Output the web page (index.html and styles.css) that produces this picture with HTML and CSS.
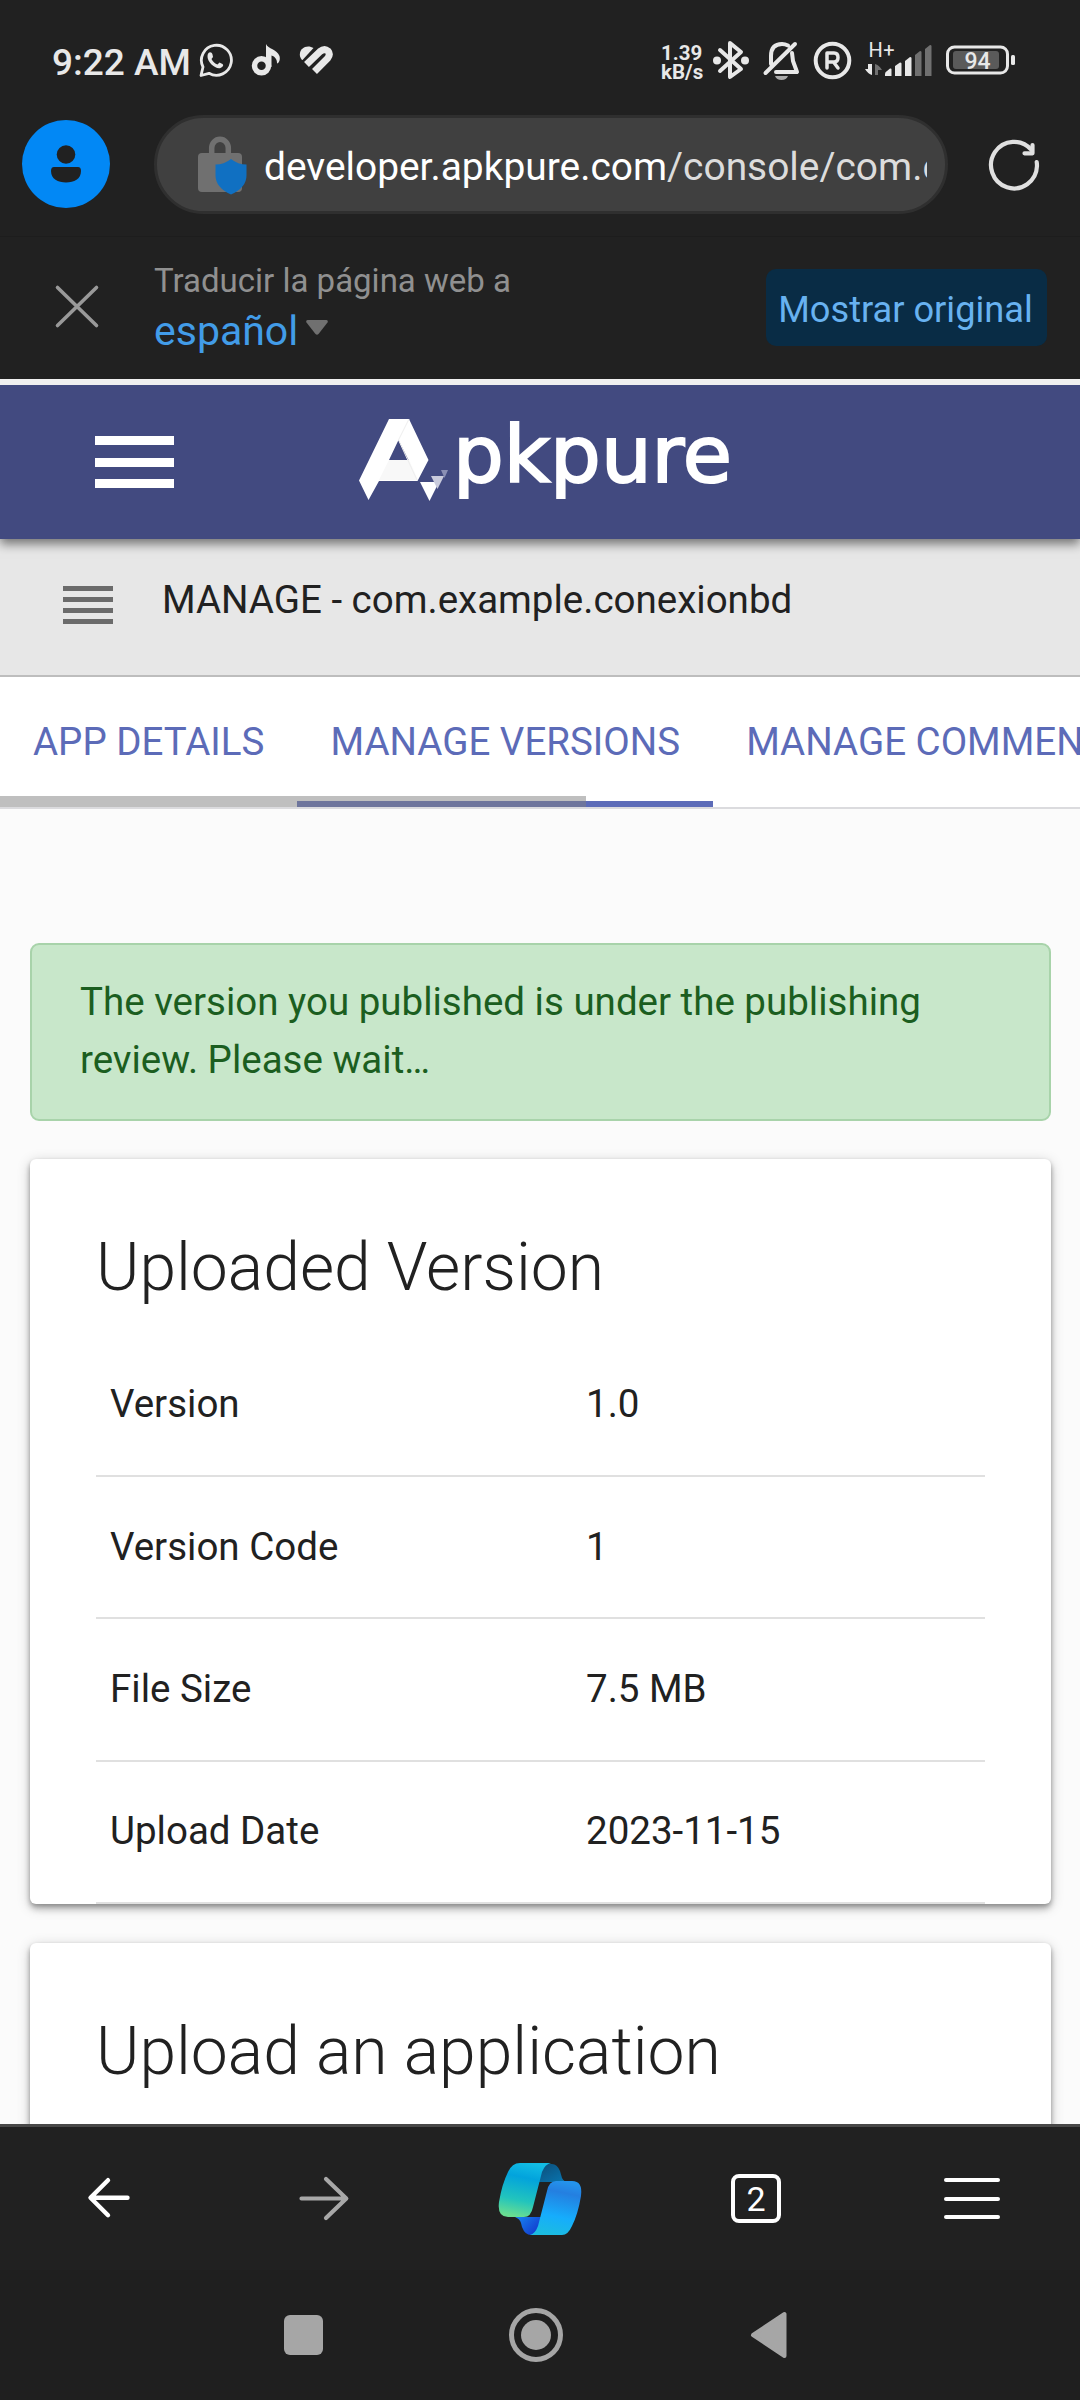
FILE: index.html
```html
<!DOCTYPE html>
<html lang="es">
<head>
<meta charset="utf-8">
<title>APKPure Developer Console</title>
<link rel="stylesheet" href="styles.css">
</head>
<body>
<div class="screen">
  <header class="browser-top">
    <div class="status">
      <span class="clock">9:22 AM</span>
      <svg class="notif" width="136" height="40" viewBox="198 42 136 40">
        <path d="M201 75.500 L203 67 A15 15 0 1 1 209 73.300 Z" fill="none" stroke="#e8e8e8" stroke-width="2.800" stroke-linejoin="round"/>
        <path d="M208.500 53c1.500-1.500 3.500-.5 4 1.500l.5 2.500-1.500 2c1.500 3 3.500 4.500 6 5.500l2-2 3 1.500c1.500 1 .5 3-2 4-5 1.500-13.500-6-13-12 .1-1.300.4-2.300 1-3z" fill="#e8e8e8"/>
        <circle cx="261.500" cy="65.800" r="7" fill="none" stroke="#e8e8e8" stroke-width="5.500"/>
        <path d="M266 44c2 5 11 5 13.500 12 1 4-.5 7-2.500 7.500.3-4-2-7-5.500-8V67H266z" fill="#e8e8e8"/>
        <path d="M302 60a8 8 0 0 1 3-13c3-1 6-.500 8.500 1L302.500 60z" fill="#e8e8e8"/>
        <path d="M306.500 64.500 L320 51.500 Q324.500 47.800 328 51 Q330.800 54.500 327.500 58.500 L314.500 71.500" fill="none" stroke="#e8e8e8" stroke-width="7"/>
      </svg>
      <div class="speed"><span>1.39</span><span>kB/s</span></div>
      <svg class="signals" width="350" height="48" viewBox="710 38 350 48">
        <g fill="none" stroke="#e8e8e8" stroke-width="4" stroke-linejoin="round" stroke-linecap="round">
          <path d="M720 50 L741 69 L730 77 V43 L741 52 L720 71"/>
          <path d="M771 64 V56 Q771 44 782 44 Q785 44 788 45.500 M792 53 L793 61 L797 72 H776 M765.500 73 L795 44"/>
          <circle cx="832.500" cy="60.500" r="16.800"/>
          <path d="M827 68 V53 H834 Q838 53 838 57.500 Q838 62 834 62 H828 M833.500 62 L838 68" stroke-width="3.500"/>
          <rect x="947.500" y="47" width="60" height="26" rx="7" stroke-width="3"/>
        </g>
        <g fill="#e8e8e8">
          <circle cx="717" cy="60.500" r="4"/><circle cx="745" cy="60.500" r="4"/>
          <path d="M775 76h13q-1.500 4-6.500 4t-6.500-4z" fill="#aaa"/>
          <path d="M868 64h4v11q-4-1-7-6h3z"/>
          <path d="M875 64q4 1 7 6h-4v5h-3z" fill="#707070"/>
          <path d="M885 74q0-2 2-3l3-2.500q1.500-.5 1.500 1V76h-6.500z"/>
          <path d="M895 66l5-3.500q1.500 0 1.500 1V76H895zM905 61l5-4q1.500 0 1.500 1V76H905z"/>
          <path d="M915 55l5-4q1.500 0 1.500 1V76H915zM925 49l5-4q1.500 0 1.500 1V76H925z" fill="#707070"/>
          <rect x="953" y="51" width="46" height="18" rx="3" fill="#5a5a5a"/>
          <rect x="1011" y="55" width="4" height="10" rx="1.500"/>
          <text class="battery" x="964.500" y="69" textLength="26">94</text>
          <text class="net" x="868.500" y="57" textLength="26">H+</text>
        </g>
      </svg>
    </div>
    <div class="address-row">
      <div class="avatar">
        <svg width="88" height="88" viewBox="22 120 88 88"><circle cx="66" cy="154.500" r="9.300" fill="#212121"/><path d="M54 167h24q3 0 3 4c0 8-7 11.500-15 11.500S51 179 51 171q0-4 3-4z" fill="#212121"/></svg>
      </div>
      <div class="address">
        <svg class="lock" width="52" height="62" viewBox="196 134 52 62">
          <path d="M211.700 156v-8a8.300 8.700 0 0 1 16.600 0v8" fill="none" stroke="#707070" stroke-width="5.500"/>
          <rect x="198" y="153" width="44" height="39" rx="4" fill="#707070"/>
          <path d="M231 159q7 5.500 15.500 5.500v11q0 12-15.500 19-15.500-7-15.500-19v-11q8.500 0 15.500-5.500z" fill="#1070c2"/>
        </svg>
        <div class="url">developer.apkpure.com<span>/console/com.example</span></div>
      </div>
      <svg class="reload" width="56" height="60" viewBox="986 137 56 60" fill="none" stroke="#e0e0e0" stroke-width="4.200" stroke-linecap="round" stroke-linejoin="round"><path d="M1036.700 161 Q1037 163 1037 165 A23 23.300 0 1 1 1031.500 149"/><path d="M1032.500 144V152.300H1024.500"/></svg>
    </div>
  </header>

  <section class="translate">
    <svg class="close" width="46" height="48" viewBox="54 284 46 48"><path d="M57.500 288.500 96.500 326.500M96.500 288.500 57.500 326.500" stroke="#999" stroke-width="3.600" stroke-linecap="round"/></svg>
    <div class="lang">
      <span class="lang-label">Traducir la página web a</span>
      <span class="lang-value">español <svg width="22" height="15" viewBox="0 0 22 15"><path d="M1.500 0h19q2 .5 1 2.500L12.500 14q-1.500 1.500-3 0L.5 2.500Q-.5 .5 1.500 0z" fill="#707070"/></svg></span>
    </div>
    <button class="original">Mostrar original</button>
  </section>

  <main class="page">
    <div class="brandbar">
      <div class="burger"><i></i><i></i><i></i></div>
      <svg class="brand" width="390" height="100" viewBox="350 410 390 100">
        <path d="M389 419h20l19.500 41-11 21H379l-10.500 19-9.500-19.500zM398.500 440l-9.500 20h19.500z" fill="#fff" fill-rule="evenodd"/>
        <path d="M389 460h20l9 20h-39z" fill="#f8f8f8"/>
        <path d="M409 419l-10.500 21 18.500 40" fill="none" stroke="#eee" stroke-width="1"/>
        <path d="M420 482h19l-9.500 19z" fill="#fff"/>
        <path d="M431 476h13l-6.500 13z" fill="#c9cbdc"/>
        <path d="M441 470h7l-3.500 8z" fill="#8a8fb4"/>
        <text class="wordmark" x="453" y="482" textLength="279" lengthAdjust="spacingAndGlyphs">pkpure</text>
      </svg>
    </div>
    <div class="crumb">
      <div class="lines"><i></i><i></i><i></i><i></i></div>
      <span>MANAGE - com.example.conexionbd</span>
    </div>
    <nav class="tabs">
      <a>APP DETAILS</a><a class="active">MANAGE VERSIONS</a><a>MANAGE COMMENTS</a>
      <div class="scroller"></div>
    </nav>
    <div class="content">
      <div class="alert">The version you published is under the publishing review. Please wait…</div>
      <section class="card">
        <h2>Uploaded Version</h2>
        <dl>
          <div><dt>Version</dt><dd>1.0</dd></div>
          <div><dt>Version Code</dt><dd>1</dd></div>
          <div><dt>File Size</dt><dd>7.5 MB</dd></div>
          <div><dt>Upload Date</dt><dd>2023-11-15</dd></div>
        </dl>
      </section>
      <section class="card">
        <h2>Upload an application</h2>
      </section>
    </div>
  </main>

  <footer class="bottom">
    <div class="toolbar">
      <svg width="46" height="46" viewBox="85 2175 46 46" fill="none" stroke="#fff" stroke-width="4.400" stroke-linecap="round" stroke-linejoin="round"><path d="M127.500 2197.800H91M108 2180.200 90.500 2197.800 108 2215.200"/></svg>
      <svg width="54" height="50" viewBox="297 2173 54 50" fill="none" stroke="#a8a8a8" stroke-width="4.200" stroke-linecap="round" stroke-linejoin="round"><path d="M301.500 2198.500H346M326 2179 346.300 2198.500 326 2218"/></svg>
      <svg width="86" height="74" viewBox="0 0 86 74">
        <defs>
          <linearGradient id="left" x1=".6" y1="0" x2=".4" y2="1"><stop offset="0" stop-color="#12bde5"/><stop offset=".28" stop-color="#02a3dc"/><stop offset=".7" stop-color="#22c4bd"/><stop offset="1" stop-color="#68dd91"/></linearGradient>
          <linearGradient id="right" x1=".6" y1="0" x2=".4" y2="1"><stop offset="0" stop-color="#2493ec"/><stop offset=".2" stop-color="#247fe0"/><stop offset=".65" stop-color="#16adfc"/><stop offset="1" stop-color="#1cbce0"/></linearGradient>
          <linearGradient id="fold" x1="0" y1="0" x2="1" y2="1"><stop offset="0" stop-color="#0d4d78"/><stop offset="1" stop-color="#0878b4"/></linearGradient>
          <linearGradient id="under" x1="0" y1="0" x2="1" y2=".6"><stop offset="0" stop-color="#1886f0"/><stop offset=".9" stop-color="#123fd0"/></linearGradient>
        </defs>
        <path d="M41 20 47 2H55Q60 2 63 9L65 16Q67 20 71 20Z" fill="url(#fold)"/>
        <path d="M20 55H47L40 73H34Q28 73 25 65L24 61Q23 57 18 55Z" fill="url(#under)"/>
        <path d="M23 1H54Q48 2 45 10L36 45Q34 55 27 55H11Q0 55 2 40Q5 22 11 10Q15 1 23 1Z" fill="url(#left)"/>
        <path d="M65 73H33Q38 72 41 64L50 29Q52 19 59 19H75Q86 19 84 34Q81 52 75 64Q71 73 65 73Z" fill="url(#right)"/>
      </svg>
      <div class="tabcount">2</div>
      <div class="menu"><i></i><i></i><i></i></div>
    </div>
    <div class="system">
      <div class="recent"></div>
      <div class="home"><i></i></div>
      <svg width="38" height="48" viewBox="0 0 38 48"><path d="M34.500 3V45L3 24Z" fill="#a6a6a6" stroke="#a6a6a6" stroke-width="4" stroke-linejoin="round"/></svg>
    </div>
  </footer>
</div>
</body>
</html>
```
FILE: styles.css
```css
* { box-sizing: border-box; }
body { margin: 0; background: #212121; font-family: Roboto, "Liberation Sans", sans-serif; }
svg { display: block; flex: none; }
.screen { width: 1080px; height: 2400px; display: flex; flex-direction: column; overflow: hidden; }

/* Status bar and address row */
.browser-top { height: 236px; background: #212121; flex: none; }
.status { height: 115px; display: flex; align-items: flex-start; }
.clock { margin: 41px 0 0 52px; width: 146px; font-size: 37px; line-height: 44px; font-weight: 500; color: #e8e8e8; white-space: nowrap; }
.notif { margin-top: 42px; }
.speed { margin: 44px 0 0 327px; width: 49px; display: flex; flex-direction: column; font-size: 20.500px; font-weight: 700; line-height: 19px; color: #e8e8e8; }
.signals { margin-top: 38px; }
.battery { font-size: 23px; font-weight: 500; }
.net { font-size: 20px; }
.address-row { display: flex; align-items: center; height: 99px; }
.avatar { width: 88px; height: 88px; margin: -1px 0 0 22px; border-radius: 50%; background: #0288f5; }
.address { width: 794px; height: 99px; margin-left: 44px; border-radius: 50px; border: 3px solid #2f2f2f; background: #404040; display: flex; align-items: center; }
.lock { margin-left: 39px; }
.url { margin: 5px 0 0 16px; width: 663px; flex: none; font-size: 38.900px; line-height: 50px; white-space: nowrap; overflow: hidden; color: #fff; }
.url span { color: #dcdcdc; }
.reload { margin-left: 38px; margin-top: 6px; }

/* Translation prompt */
.translate { height: 143px; flex: none; border-top: 1px solid #1d1d1d; background: #212121; display: flex; align-items: flex-start; }
.close { margin: 46px 0 0 54px; }
.lang { margin: 23px 0 0 54px; width: 612px; display: flex; flex-direction: column; }
.lang-label { font-size: 33px; line-height: 42px; color: #909090; }
.lang-value { font-size: 41px; line-height: 58px; color: #429ce8; display: flex; gap: 8px; align-items: center; }
.lang-value svg { margin-top: -8px; }
.original { width: 281px; height: 77px; margin-top: 32px; padding: 4px 2px 0 0; border: 0; border-radius: 10px; background: #092c45; color: #68b2f0; font: 36.200px Roboto, sans-serif; }

/* Web page */
.page { height: 1745px; flex: none; overflow: hidden; background: #fbfbfb; border-top: 6px solid #f0f0f0; }
.brandbar { position: relative; height: 154px; background: #424a80; display: flex; align-items: center; box-shadow: 0 5px 10px rgba(0,0,0,.5); }
.burger { margin-left: 95px; width: 79px; height: 52px; display: flex; flex-direction: column; justify-content: space-between; }
.burger i { height: 9px; background: #fff; }
.brand { margin-left: 176px; margin-top: -4px; }
.wordmark { font-family: "DejaVu Sans", sans-serif; font-size: 78px; fill: #fff; stroke: #fff; stroke-width: 2px; }
.crumb { height: 138px; background: #e7e7e7; border-bottom: 2px solid #bdbdbd; display: flex; align-items: flex-start; font-size: 38.500px; line-height: 46px; color: #212121; }
.lines { margin: 47px 49px 0 63px; width: 50px; height: 38px; display: flex; flex-direction: column; justify-content: space-between; }
.lines i { height: 5px; background: #6b6b6b; }
.crumb span { margin-top: 38px; }
.tabs { position: relative; height: 132px; background: #fff; border-bottom: 2px solid #dbdbde; display: flex; white-space: nowrap; font-size: 38.500px; line-height: 129px; color: #5c6bb8; }
.tabs a { flex: none; height: 130px; padding: 0 33px; }
.tabs .active { border-bottom: 6px solid #5c6bb8; }
.scroller { position: absolute; left: 0; bottom: 0; width: 586px; height: 11px; background: rgba(128,128,128,.5); }
.content { padding: 134px 29px 0 30px; display: flex; flex-direction: column; }
.alert { height: 178px; padding: 28px 48px; border: 2px solid #a8d3aa; border-radius: 9px; background: #c8e7ca; color: #1b5e20; font-size: 38.500px; line-height: 58px; }
.card { margin-top: 38px; height: 745px; padding: 65px 66px 0; background: #fff; border-radius: 6px; color: #212121; box-shadow: 0 5px 6px rgba(0,0,0,.2), 0 3px 14px rgba(0,0,0,.2), 0 2px 4px rgba(0,0,0,.2); }
.card + .card { margin-top: 39px; }
h2 { margin: 0; font-size: 66px; line-height: 88px; font-weight: 300; white-space: nowrap; }
dl { margin: 22.700px 0 0; font-size: 38.500px; }
dl div { height: 142.320px; display: flex; align-items: center; border-bottom: 2px solid #e0e0e0; }
dt { width: 476px; padding-left: 14px; }
dt, dd { margin: 0; padding-bottom: 2px; }
dd { padding-left: 14px; }

/* Browser toolbar and system keys */
.bottom { height: 276px; flex: none; background: #212121; border-top: 3px solid #484848; }
.toolbar { height: 143px; display: flex; align-items: center; }
.toolbar > :nth-child(1) { margin-left: 85px; margin-top: -1px; }
.toolbar > :nth-child(2) { margin-left: 166px; margin-top: -1px; }
.toolbar > :nth-child(3) { margin-left: 146px; margin-top: 1px; }
.tabcount { margin-left: 148px; width: 50px; height: 49px; border: 4px solid #fff; border-radius: 8px; font-size: 34px; line-height: 42px; text-align: center; color: #fff; }
.menu { margin-left: 163px; width: 56px; height: 41px; display: flex; flex-direction: column; justify-content: space-between; }
.menu i { height: 4px; border-radius: 2px; background: #fff; }
.system { height: 130px; background: #1f1f1f; display: flex; align-items: center; }
.recent { margin-left: 284px; width: 39px; height: 40px; border-radius: 6px; background: #a6a6a6; }
.home { margin-left: 186px; width: 54px; height: 54px; border: 5px solid #a6a6a6; border-radius: 50%; padding: 7px; }
.home i { display: block; width: 30px; height: 30px; border-radius: 50%; background: #a6a6a6; }
.system svg { margin-left: 187px; }
```
